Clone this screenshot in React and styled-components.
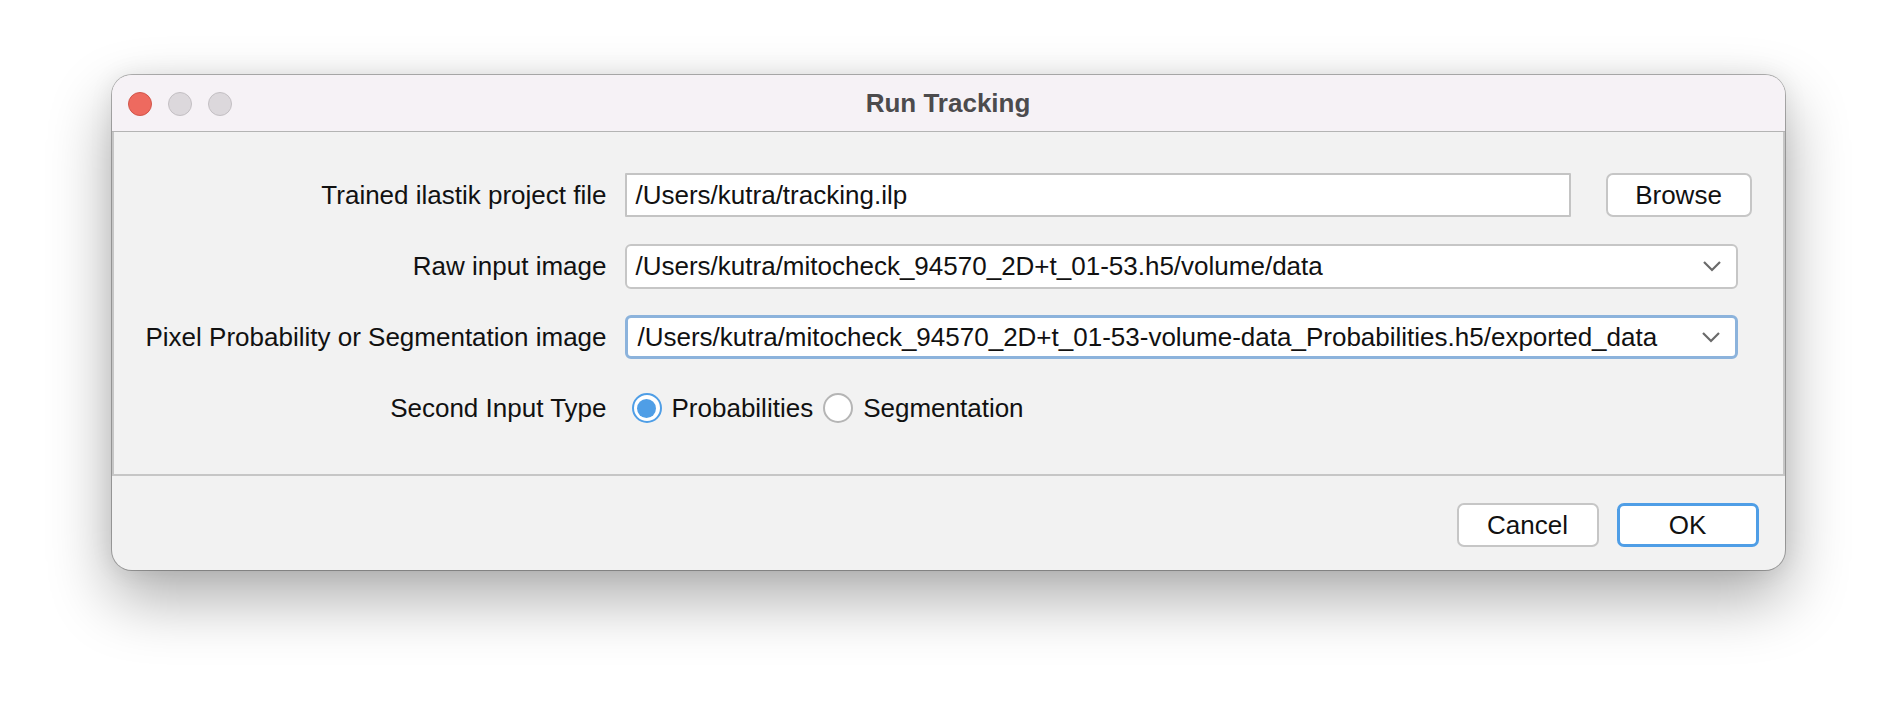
import React from 'react';
import styled, { createGlobalStyle } from 'styled-components';

const GlobalStyle = createGlobalStyle`
  html, body {
    margin: 0;
    padding: 0;
    background: #ffffff;
    font-family: "Liberation Sans", Arial, sans-serif;
  }
`;

const Page = styled.div`
  width: 1896px;
  height: 718px;
  padding-top: 75px;
  box-sizing: border-box;
  display: flex;
  justify-content: center;
  align-items: flex-start;
  background: #ffffff;
`;

const Window = styled.div`
  width: 1673px;
  border-radius: 20px;
  overflow: hidden;
  background: #f2f2f2;
  box-shadow: 0 0 0 1px rgba(0, 0, 0, 0.28), 0 28px 64px rgba(0, 0, 0, 0.33),
    0 0 24px rgba(0, 0, 0, 0.08);
`;

const TitleBar = styled.div`
  height: 56px;
  border-bottom: 1px solid #b4b4b4;
  background: #f6f2f6;
  display: flex;
  align-items: center;
  position: relative;
  padding-left: 16px;
`;

const Lights = styled.div`
  display: flex;
  gap: 16px;
  margin-top: 2px;
`;

const Light = styled.span`
  width: 24px;
  height: 24px;
  border-radius: 50%;
  box-sizing: border-box;
  background: ${(p) => (p.close ? '#ee6a5f' : '#dcd8dc')};
  border: 1px solid ${(p) => (p.close ? '#d1554a' : '#c3bfc3')};
`;

const Title = styled.div`
  position: absolute;
  left: 0;
  right: 0;
  text-align: center;
  font-weight: bold;
  font-size: 26px;
  color: #4c4b4d;
  pointer-events: none;
`;

const Content = styled.div`
  border: 2px solid #c6c6c6;
  border-top: none;
  padding: 41px 31px 44px 32px;
  display: grid;
  grid-template-columns: 461px 1fr 163px;
  grid-auto-rows: 44px;
  column-gap: 18px;
  row-gap: 27px;
  align-items: center;
`;

const Label = styled.div`
  font-size: 26px;
  color: #111;
  text-align: right;
  white-space: nowrap;
`;

const TextField = styled.div`
  height: 44px;
  box-sizing: border-box;
  background: #fff;
  border: 2px solid #c4c4c4;
  border-radius: 1px;
  padding-left: 9px;
  display: flex;
  align-items: center;
  font-size: 26px;
  color: #111;
  white-space: nowrap;
  overflow: hidden;
`;

const Combo = styled.div`
  grid-column: 2 / 4;
  margin-right: 14px;
  height: ${(p) => (p.focused ? '44px' : '45px')};
  box-sizing: border-box;
  background: #fff;
  border: ${(p) => (p.focused ? '3px solid #8cb3dc' : '2px solid #c6c6c6')};
  border-radius: 6px;
  padding-left: ${(p) => (p.focused ? '10px' : '9px')};
  padding-right: 14px;
  display: flex;
  align-items: center;
  justify-content: space-between;
  font-size: 26px;
  color: #111;
  white-space: nowrap;
  overflow: hidden;
`;

const PushButton = styled.div`
  height: 44px;
  box-sizing: border-box;
  background: #fff;
  border: ${(p) => (p.primary ? '3px solid #4f9ee6' : '2px solid #c6c6c6')};
  border-radius: 7px;
  display: flex;
  align-items: center;
  justify-content: center;
  font-size: 26px;
  color: #111;
  width: ${(p) => p.w || 142}px;
`;

const BrowseCell = styled.div`
  display: flex;
  justify-content: flex-end;
`;

const RadioGroup = styled.div`
  grid-column: 2 / 4;
  display: flex;
  align-items: center;
  padding-left: 7px;
  gap: 10px;
`;

const RadioItem = styled.label`
  display: flex;
  align-items: center;
  gap: 10px;
  font-size: 26px;
  color: #111;
`;

const RadioCircle = styled.span`
  width: 30px;
  height: 30px;
  border-radius: 50%;
  box-sizing: border-box;
  background: #fff;
  border: 2px solid ${(p) => (p.checked ? '#4f9ee6' : '#b5b5b5')};
  display: flex;
  align-items: center;
  justify-content: center;

  &::after {
    content: '';
    display: ${(p) => (p.checked ? 'block' : 'none')};
    width: 19px;
    height: 19px;
    border-radius: 50%;
    background: #4f9ee6;
  }
`;

const Footer = styled.div`
  display: flex;
  justify-content: flex-end;
  gap: 18px;
  padding: 27px 26px 23px 0;
`;

const Chevron = () => (
  <svg width="20" height="12" viewBox="0 0 20 12">
    <path d="M2 2 L10 10 L18 2" fill="none" stroke="#6a6a6a" strokeWidth="2.2" />
  </svg>
);

export default function App() {
  return (
    <Page>
      <GlobalStyle />
      <Window>
        <TitleBar>
          <Lights>
            <Light close />
            <Light />
            <Light />
          </Lights>
          <Title>Run Tracking</Title>
        </TitleBar>

        <Content>
          <Label>Trained ilastik project file</Label>
          <TextField>/Users/kutra/tracking.ilp</TextField>
          <BrowseCell>
            <PushButton w={146}>Browse</PushButton>
          </BrowseCell>

          <Label>Raw input image</Label>
          <Combo>
            <span>/Users/kutra/mitocheck_94570_2D+t_01-53.h5/volume/data</span>
            <Chevron />
          </Combo>

          <Label>Pixel Probability or Segmentation image</Label>
          <Combo focused>
            <span>/Users/kutra/mitocheck_94570_2D+t_01-53-volume-data_Probabilities.h5/exported_data</span>
            <Chevron />
          </Combo>

          <Label>Second Input Type</Label>
          <RadioGroup>
            <RadioItem>
              <RadioCircle checked />
              Probabilities
            </RadioItem>
            <RadioItem>
              <RadioCircle />
              Segmentation
            </RadioItem>
          </RadioGroup>
        </Content>

        <Footer>
          <PushButton w={142}>Cancel</PushButton>
          <PushButton primary w={142}>OK</PushButton>
        </Footer>
      </Window>
    </Page>
  );
}
